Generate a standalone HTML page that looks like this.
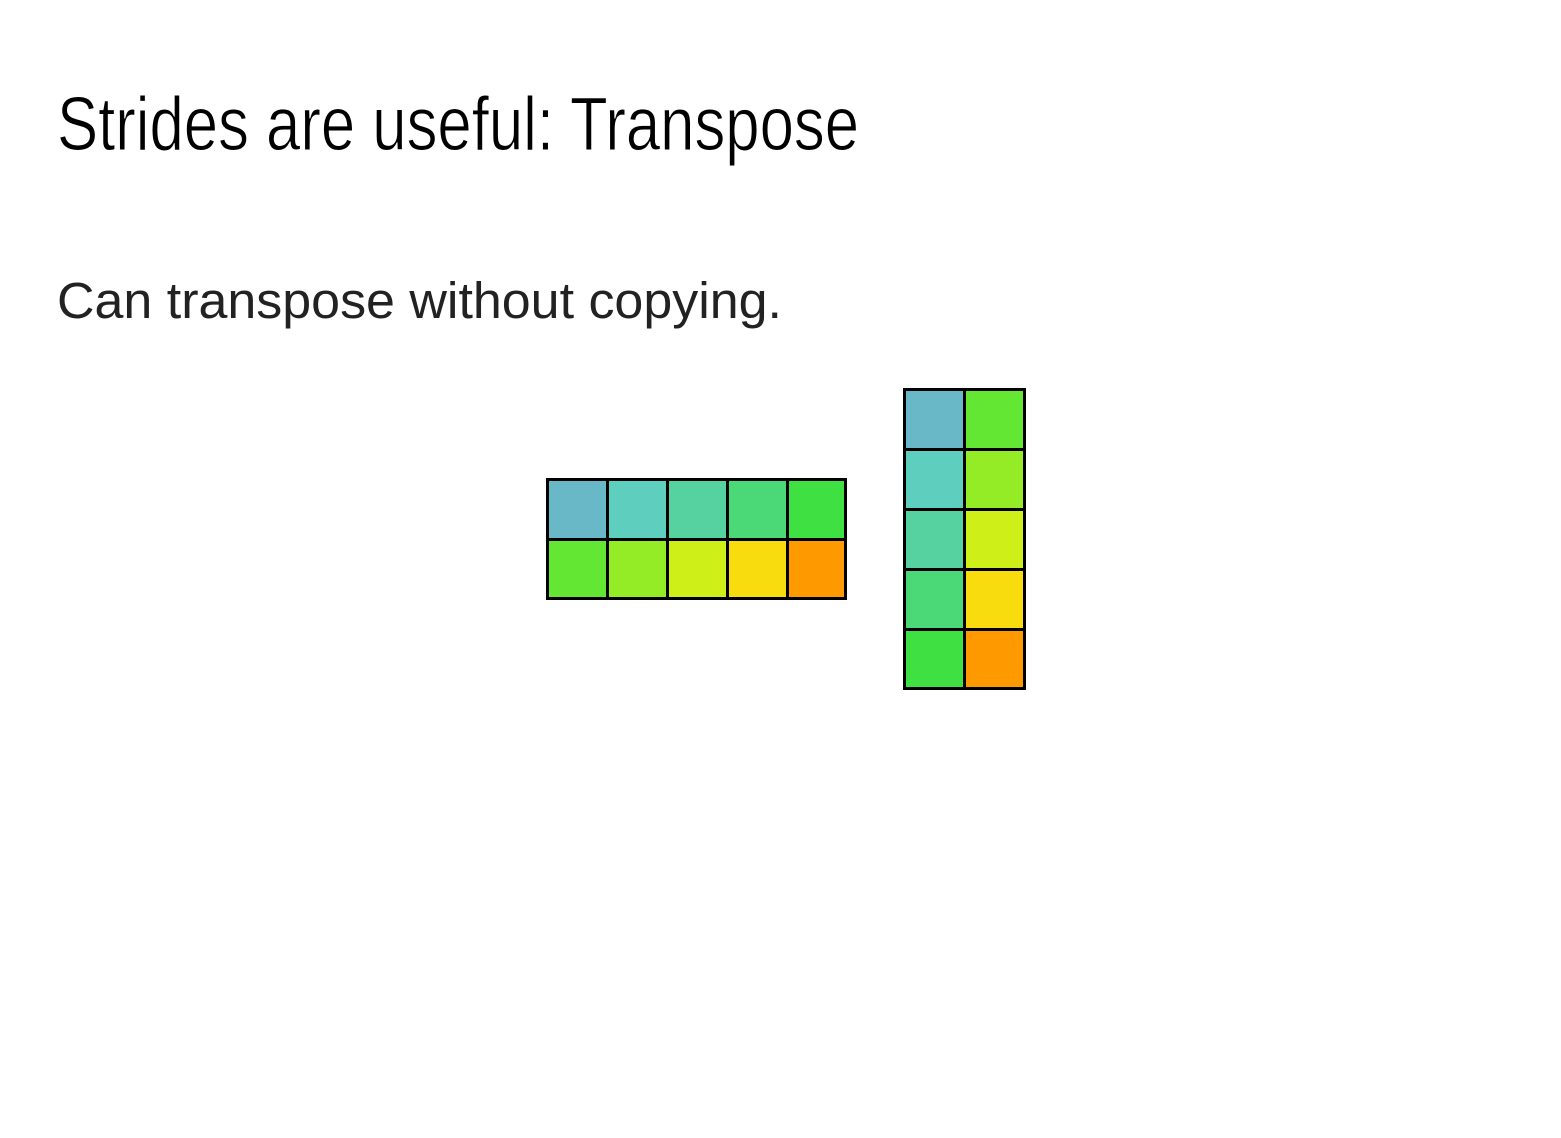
<!DOCTYPE html>
<html><head><style>html,body{margin:0;padding:0;background:#fff;width:1561px;height:1138px;overflow:hidden}</style></head>
<body>
<svg width="1561" height="1138" xmlns="http://www.w3.org/2000/svg">
<text x="57" y="150" font-family="Liberation Sans Narrow, Liberation Sans, sans-serif" font-size="76" fill="#000" stroke="#fff" stroke-width="1" paint-order="normal" textLength="802" lengthAdjust="spacingAndGlyphs">Strides are useful: Transpose</text>
<text x="57" y="318" font-family="Liberation Sans, sans-serif" font-size="51" fill="#222" textLength="725" lengthAdjust="spacingAndGlyphs">Can transpose without copying.</text>
<g stroke="#000" stroke-width="3">
<rect x="547.5" y="479.5" width="60" height="60" fill="#69b8c8"/>
<rect x="607.5" y="479.5" width="60" height="60" fill="#5ecebe"/>
<rect x="667.5" y="479.5" width="60" height="60" fill="#55d2a0"/>
<rect x="727.5" y="479.5" width="60" height="60" fill="#4bd978"/>
<rect x="787.5" y="479.5" width="58" height="60" fill="#3fe142"/>
<rect x="547.5" y="539.5" width="60" height="59" fill="#63e733"/>
<rect x="607.5" y="539.5" width="60" height="59" fill="#93ec26"/>
<rect x="667.5" y="539.5" width="60" height="59" fill="#cef018"/>
<rect x="727.5" y="539.5" width="60" height="59" fill="#f8dc0d"/>
<rect x="787.5" y="539.5" width="58" height="59" fill="#fe9900"/>
<rect x="904.5" y="389.5" width="60" height="60" fill="#69b8c8"/>
<rect x="904.5" y="449.5" width="60" height="60" fill="#5ecebe"/>
<rect x="904.5" y="509.5" width="60" height="60" fill="#55d2a0"/>
<rect x="904.5" y="569.5" width="60" height="60" fill="#4bd978"/>
<rect x="904.5" y="629.5" width="60" height="59" fill="#3fe142"/>
<rect x="964.5" y="389.5" width="60" height="60" fill="#63e733"/>
<rect x="964.5" y="449.5" width="60" height="60" fill="#93ec26"/>
<rect x="964.5" y="509.5" width="60" height="60" fill="#cef018"/>
<rect x="964.5" y="569.5" width="60" height="60" fill="#f8dc0d"/>
<rect x="964.5" y="629.5" width="60" height="59" fill="#fe9900"/>
</g>
</svg>
</body></html>
